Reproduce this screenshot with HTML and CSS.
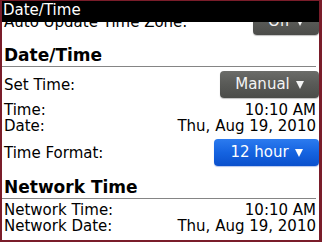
FILE: index.html
```html
<!DOCTYPE html>
<html>
<head>
<meta charset="utf-8">
<link rel="stylesheet" href="styles.css">
</head>
<body>
<div class="screen">
  <div class="content">
    <div class="row">
      <span class="label">Auto Update Time Zone:</span>
      <span class="btn btn-gray btn-off">Off<span class="caret"></span></span>
    </div>
    <div class="heading heading-first">Date/Time</div>
    <div class="row row-after-heading">
      <span class="label">Set Time:</span>
      <span class="btn btn-gray btn-manual">Manual<span class="caret"></span></span>
    </div>
    <div class="info info-first"><span>Time:</span><span>10:10 AM</span></div>
    <div class="info"><span>Date:</span><span>Thu, Aug 19, 2010</span></div>
    <div class="row row-format">
      <span class="label">Time Format:</span>
      <span class="btn btn-blue btn-hour">12 hour<span class="caret"></span></span>
    </div>
    <div class="heading heading-second">Network Time</div>
    <div class="info info-net"><span>Network Time:</span><span>10:10 AM</span></div>
    <div class="info"><span>Network Date:</span><span>Thu, Aug 19, 2010</span></div>
  </div>
  <div class="titlebar">Date/Time</div>
</div>
</body>
</html>
```
FILE: styles.css
```css
html, body {
  margin: 0;
  padding: 0;
  background: #ffffff;
}
body {
  font-family: "DejaVu Sans", "Liberation Sans", sans-serif;
  font-size: 15px;
  color: #000;
}
.screen {
  position: relative;
  width: 322px;
  height: 242px;
  box-sizing: border-box;
  border-style: solid;
  border-color: #7a1d2a;
  border-width: 1px 3px 2px 2px;
  background: #fff;
  overflow: hidden;
}
.titlebar {
  position: absolute;
  top: 0;
  left: 0;
  right: 0;
  height: 21px;
  line-height: 19px;
  background: #000;
  color: #fff;
  font-size: 15px;
  padding-left: 1px;
}
.content {
  padding-top: 7px;
}
.row {
  display: flex;
  justify-content: space-between;
  align-items: center;
  padding: 0 0 0 2px;
  height: 27px;
}
.label {
  line-height: 16px;
}
.btn {
  display: flex;
  align-items: center;
  justify-content: center;
  height: 27px;
  box-sizing: border-box;
  border-radius: 4px;
  color: #f4f4f4;
  font-size: 15px;
  line-height: 27px;
}
.btn-gray {
  background: linear-gradient(#6c6d6a, #5a5b58 45%, #4b4c49);
  box-shadow: 0 1px 1px rgba(0, 0, 0, 0.25);
}
.btn-blue {
  background: linear-gradient(#2c7bef, #1563e0 50%, #0a50cc);
  box-shadow: 0 1px 1px rgba(40, 90, 200, 0.35);
  color: #fff;
}
.btn-off { width: 66px; }
.btn-manual { width: 99px; }
.btn-hour { width: 105px; }
.caret {
  width: 0;
  height: 0;
  margin-left: 6px;
  border-left: 4.5px solid transparent;
  border-right: 4.5px solid transparent;
  border-top: 8px solid currentColor;
}
.heading {
  font-weight: bold;
  font-size: 17px;
  line-height: 20px;
  padding: 0 0 1px 2px;
  margin-right: 3px;
  border-bottom: 1px solid #858585;
}
.heading-first { margin-top: 10px; }
.heading-second { margin-top: 11px; }
.row-after-heading { margin-top: 4px; }
.row-format { margin-top: 5px; }
.info {
  display: flex;
  justify-content: space-between;
  line-height: 16px;
  padding: 0 3px 0 2px;
}
.info-first { margin-top: 4px; }
.info-net { margin-top: 3px; }
```
